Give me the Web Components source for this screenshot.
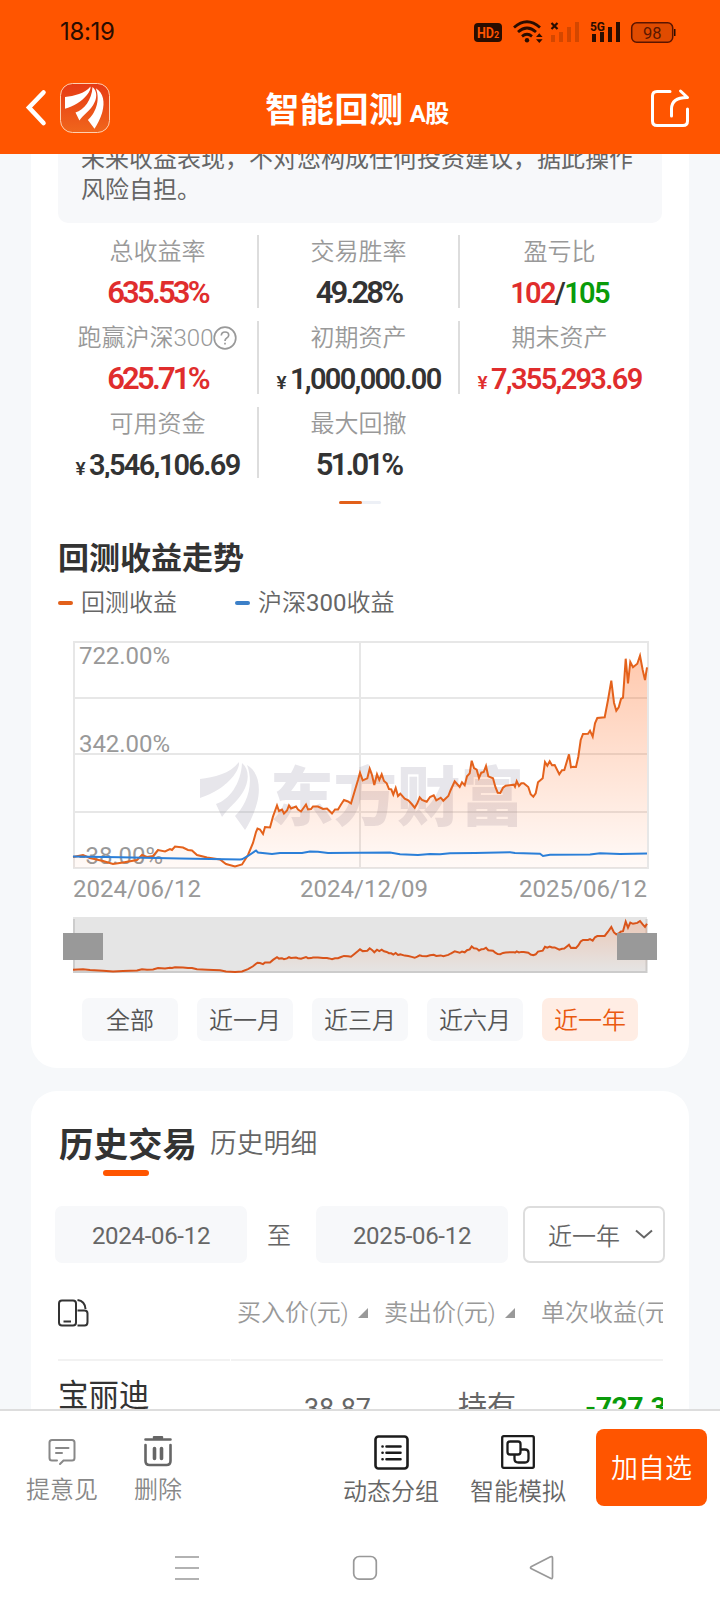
<!DOCTYPE html>
<html lang="zh-CN">
<head>
<meta charset="utf-8">
<title>智能回测</title>
<style>
body { margin: 0; width: 720px; height: 1612px; overflow: hidden; display: flex; flex-direction: column; background: #f6f8fa; color: #333; font: 24px/32px Roboto, "Noto Sans CJK SC", sans-serif; }
main { height: 1255px; overflow: hidden; padding: 0 31px; display: flex; flex-direction: column; gap: 23px; }
.profit { height: 914px; border-radius: 0 0 26px 26px; }
.history { height: 420px; border-radius: 26px 26px 0 0; }
.stats { display: grid; grid-template-columns: repeat(3, 201px); grid-auto-rows: 73px; row-gap: 13px; margin: 12px 0 0 27px; height: 243px; overflow: hidden; }
main, page-card, .stats { flex-shrink: 0; }
</style>
</head>
<body>
	<app-header><span>智能回测</span><small slot="sub">A股</small></app-header>
	<main>
		<page-card class="profit">
			<notice-box>未来收益表现，不对您构成任何投资建议，据此操作<br>风险自担。</notice-box>
			<div class="stats">
				<stat-cell kind="rate" tone="up" label="总收益率">635.53%</stat-cell>
				<stat-cell kind="rate" label="交易胜率">49.28%</stat-cell>
				<stat-cell kind="ratio" label="盈亏比" last><span style="color:#e02d2d">102</span>/<span style="color:#0a9b0a">105</span></stat-cell>
				<stat-cell kind="rate" tone="up" label="跑赢沪深300" help>625.71%</stat-cell>
				<stat-cell kind="money" label="初期资产">1,000,000.00</stat-cell>
				<stat-cell kind="money" tone="up" label="期末资产" last>7,355,293.69</stat-cell>
				<stat-cell kind="money" label="可用资金">3,546,106.69</stat-cell>
				<stat-cell kind="rate" label="最大回撤" last>51.01%</stat-cell>
			</div>
			<page-dots></page-dots>
			<chart-head><span>回测收益走势</span><span slot="a">回测收益</span><span slot="b">沪深<span style="font-weight:400">300</span>收益</span></chart-head>
			<trend-chart></trend-chart>
			<range-tabs items="全部,近一月,近三月,近六月,近一年" active="4"></range-tabs>
		</page-card>
		<page-card class="history">
			<history-tabs><span>历史交易</span><span slot="other">历史明细</span></history-tabs>
			<date-filter from="2024-06-12" to="2025-06-12">近一年</date-filter>
			<trade-table></trade-table>
		</page-card>
	</main>
	<tool-bar></tool-bar>
	<nav-bar></nav-bar>
<script>
const define = ( name, html, setup ) =>
{
	const template = document.createElement( 'template' );
	template.innerHTML = html;
	customElements.define( name, class extends HTMLElement
	{
		constructor()
		{
			super();
			this.attachShadow( { mode: 'open' } ).appendChild( template.content.cloneNode( true ) );
			if ( setup ) { setup( this, this.shadowRoot ); }
		}
	} );
};

// Three feathers of the brand mark, in a 60x68 box.
const FEATHERS = `
	<path d="M0 17C14 15 30 12 39 0C40 8 30 20 19 27C13 31 6 34 0 36Z"/>
	<path d="M42 1C50 8 49 20 43 30C37 40 29 45 22 55L16 42C29 38 41 22 42 1Z"/>
	<path d="M47 3C59 10 61 26 57 41C54 52 49 62 45 68L35 54C45 45 55 24 47 3Z"/>`;

define( 'app-header', `
<style>
:host { display: block; flex: none; height: 154px; background: #ff5500; color: #fff; }
.status { height: 64px; display: flex; align-items: center; padding: 0 44px 0 60px; box-sizing: border-box; color: #2a0d00; }
time { flex: 1; font: 24px/28px Inter, Roboto, sans-serif; letter-spacing: -.300px; }
.bar { display: grid; grid-template-columns: 120px 1fr 120px; align-items: center; height: 90px; }
.left { display: flex; gap: 13px; padding: 0 0 2px 25px; align-items: center; }
h1 { margin: 6px 0 0; font-size: 34px; line-height: 44px; font-weight: 700; display: flex; justify-content: center; align-items: baseline; gap: 6px; padding-right: 6px; letter-spacing: .600px; }
h1 ::slotted(small) { font-size: 24px; letter-spacing: -.5px; }
svg { display: block; }
.share { margin: -2px 0 0 50px; }
</style>
<div class="status">
	<time>18:19</time>
	<svg width="203" height="28" viewBox="473 18 203 28" fill="#2a0d00">
		<rect x="474" y="23" width="28" height="19" rx="4"/>
		<text x="477" y="38" font-family="Roboto" font-size="14.5" font-weight="700" fill="#ff5500" textLength="17" lengthAdjust="spacingAndGlyphs">HD</text>
		<text x="494" y="38" font-family="Roboto" font-size="9" font-weight="700" fill="#ff5500">2</text>
		<g fill="none" stroke="#2a0d00" stroke-width="2.8">
			<path d="M514 27.5Q527 16 540 27.5M518 32Q527 24 536 32M522 36.3Q527 32.3 532 36.3"/>
		</g>
		<circle cx="527" cy="40.3" r="2.2"/>
		<path d="M536 37l3.3-3.8 3.3 3.8zM536 39.2l3.3 3.8 3.3-3.8z"/>
		<path d="M551.5 23l6 6M557.500 23l-6 6" stroke="#2a0d00" stroke-width="2.2"/>
		<g opacity=".2"><path d="M551 35h4v7h-4zM559 32h4v10h-4zM567 27h4v15h-4zM575 22h4v20h-4z"/></g>
		<text x="590" y="31" font-family="Roboto" font-size="13" font-weight="700" textLength="15" lengthAdjust="spacingAndGlyphs">5G</text>
		<path d="M592 34h4v8h-4zM600 32h4v10h-4zM608 27h4v15h-4zM616 22h4v20h-4z"/>
		<rect x="631.7" y="22.700" width="41" height="19.500" rx="5" fill="#e04b00" stroke="#5a1500" stroke-width="1.500"/>
		<path d="M674 29h1.500v7h-1.500z"/>
		<text x="643" y="38.500" font-family="Roboto" font-size="16.500" fill="#5a1800">98</text>
	</svg>
</div>
<div class="bar">
	<div class="left">
		<svg width="22" height="38" viewBox="0 0 22 38"><path d="M18.500 3.500L4 18.500L18.500 34" fill="none" stroke="#fff" stroke-width="4.600" stroke-linecap="round"/></svg>
		<svg width="50" height="50" viewBox="0 0 50 50">
			<defs><linearGradient id="g" x2="0" y2="1"><stop stop-color="#e63a14"/><stop offset="1" stop-color="#f0661c"/></linearGradient></defs>
			<rect x=".5" y=".5" width="49" height="49" rx="12" fill="url(#g)" stroke="#ffd0b0"/>
			<g fill="#fff" transform="translate(5 3.500) scale(.655 .62)">${ FEATHERS }</g>
		</svg>
	</div>
	<h1><slot></slot><slot name="sub"></slot></h1>
	<svg class="share" width="40" height="40" viewBox="0 0 40 40" fill="none" stroke="#fff" stroke-width="3" stroke-linecap="round" stroke-linejoin="round">
		<path d="M20 3.500H7Q2.500 3.500 2.500 8V33Q2.500 37.500 7 37.500H33Q37.500 37.500 37.500 33V21M21.500 28V21Q21.500 9.500 37 9.500M30.500 3L37.500 9.500"/>
	</svg>
</div>` );

define( 'page-card', `
<style>:host { display: block; background: #fff; overflow: hidden; }</style>
<slot></slot>` );

define( 'notice-box', `
<style>
:host { display: flex; flex-direction: column; justify-content: flex-end; height: 69px; box-sizing: border-box; margin: 0 27px; padding: 0 0 17px 23px; background: #f7f8fa; border-radius: 0 0 10px 10px; color: #666; line-height: 31px; white-space: nowrap; overflow: hidden; }
</style>
<div><slot></slot></div>` );

define( 'stat-cell', `
<style>
:host { display: flex; flex-direction: column; align-items: center; box-sizing: border-box; width: 201px; border-right: 2px solid #ddd; white-space: nowrap; }
:host([last]) { border-color: transparent; }
:host([tone="up"]) .value { color: #e02d2d; }
.label { display: flex; align-items: center; height: 32px; padding-top: 1px; font-weight: 350; color: #999; }
.value { margin-top: 9px; height: 32px; line-height: 32px; font-weight: 600; font-size: 29px; color: #333; letter-spacing: -1.700px; }
:host([kind="rate"]) .value { font-size: 31px; letter-spacing: -2.800px; }
.yen { display: none; font-size: 19px; margin-right: 5px; }
:host([kind="money"]) .yen { display: inline; }
svg { display: none; }
:host([help]) svg { display: block; }
</style>
<div class="label"><span></span><svg width="24" height="24" viewBox="0 0 24 24" fill="none" stroke="#999" stroke-width="1.700"><circle cx="12" cy="12" r="10.800"/><path d="M8.300 9.500Q8.500 6 12 6Q15.700 6 15.700 9.200Q15.700 11 13.500 12.300Q12 13.200 12 15M12 16.800V18.500"/></svg></div>
<div class="value"><span class="yen">¥</span><slot></slot></div>`,
( host, root ) => { root.querySelector( '.label span' ).textContent = host.getAttribute( 'label' ); } );

define( 'page-dots', `
<style>
:host { display: flex; width: 42px; height: 3px; margin: 23px auto 0 308px; border-radius: 2px; background: #edf0f6; }
i { width: 23px; border-radius: 2px; background: #e2601a; }
</style>
<i></i>` );

define( 'chart-head', `
<style>
:host { display: block; margin-left: 27px; }
h2 { margin: 34px 0 0; font-size: 31px; line-height: 42px; font-weight: 700; }
.legend { display: flex; align-items: center; height: 32px; margin-top: 7px; color: #666; font-weight: 350; }
i { width: 15px; height: 4px; border-radius: 2px; background: #e2601a; margin-right: 8px; }
.b { background: #3c80c8; margin-left: 58px; margin-right: 8px; }
</style>
<h2><slot></slot></h2>
<div class="legend"><i></i><slot name="a"></slot><i class="b"></i><slot name="b"></slot></div>` );

const PROFIT = '73,857 83,855 90,858 103,861 113,864 123,862.5 137,860 142,855 147,857 153,856 158,850 165,851.5 170,849 172,850 175,846.5 183,847.5 188,850 192,850.5 197,855 207,857.5 220,859.5 226,864 235,866.5 242,864.5 248,855 253,843 256,832 257.5,828.5 260,829.5 263,834 265,827 270,827.5 273,816.5 277,805.5 279,811 282,809.5 284,813.5 287,810.5 289,805.5 291,808.5 296,806.5 298,809.5 301,811.5 306,804.5 308,809.5 311,809 313,806.5 318,806.5 323,809 327,808.5 329,810.5 332,813.5 335,809.5 338,809.5 341,804.5 344,800 348,801.5 351,803.5 355,790 358,780 360,772.7 362.7,780.3 367.3,778.3 369.7,768.7 372,775 374.3,785 377,774.3 379.3,780 381.7,774.3 384,781 386.7,783.3 389,789 391.3,789.3 393.3,794.7 395.7,788 398,796 400.3,793.7 404.7,798.7 408.3,800.3 411.7,804 414.7,807.7 417.3,803.3 419.7,797.3 422,800 426.7,801.7 430,797 433.7,795.3 436.3,800.3 440.7,797.7 443.3,800.7 448.3,796 450.7,790 454.7,781.3 459.7,787 462,782.3 464.7,785.3 467,776.3 469.7,773.3 471.7,760.7 474,768 476.7,769.7 479,778 481.3,772.7 483.7,772 486,766 488.3,776.3 493,778.3 495.3,786.7 497.7,792.7 500.3,793 503,787.7 505.7,785.7 514,784.7 515,786.7 516.7,781.3 519,786 521.3,783.3 523.7,783.3 528.3,787 530.7,794.3 533.3,796.7 535.7,793.3 538,782.3 542.7,778.3 545,762 547.3,765.7 549.7,761.3 552,765.3 554.7,765 559.3,774.3 562,770.3 564.3,770 569,754.3 571,767.3 573.3,766.7 576,767 578.3,756.7 580.7,740 583,734 588,733.7 590,730.7 592.7,736.7 595,723.3 597.3,718 604.7,717.3 608,700 611.3,680.7 614,702.7 616.3,710.7 618.7,707.3 621,699 623,697.7 625.7,658.7 628,683.3 630.3,662 633,667.3 637.3,663.7 640,655.7 642.7,670 645,680 647,667.3';
const INDEX = '73,856.5 120,857.3 180,858.5 240,859.5 242,859.3 248,856 256,850.5 258,852.5 272,854 280,853 302,853 310,851.5 318,851.7 328,853 390,852.4 400,854.3 418,855 430,854 440,854.3 450,853.3 475,853 510,852.3 515,853 540,853.8 543,856 550,854.8 590,854.5 600,853.3 620,854 647,853.5';
// The overview repeats the profit line, squeezed into the slider strip.
const OVERVIEW = PROFIT.split( ' ' ).map( ( p ) =>
{
	const [ x, y ] = p.split( ',' ).map( Number );
	return `${ x },${ ( 972 - ( 866.5 - y ) * 0.242 ).toFixed( 1 ) }`;
} ).join( ' ' );

define( 'trend-chart', `
<style>
:host { display: block; }
svg { display: block; }
text { font-family: Roboto, "Noto Sans CJK SC", sans-serif; font-size: 24px; fill: #999; }
.mark text { font-size: 64px; font-weight: 900; fill: #e7e6eb; }
</style>
<svg width="658" height="366" viewBox="31 619 658 366">
	<defs>
		<linearGradient id="area" gradientUnits="userSpaceOnUse" x1="0" y1="655" x2="0" y2="868"><stop stop-color="#ff5500" stop-opacity=".32"/><stop offset="1" stop-color="#ff5500" stop-opacity=".03"/></linearGradient>
		<linearGradient id="mini" gradientUnits="userSpaceOnUse" x1="0" y1="920" x2="0" y2="973"><stop stop-color="#ff5500" stop-opacity=".2"/><stop offset="1" stop-color="#ff5500" stop-opacity="0"/></linearGradient>
	</defs>
	<g class="mark">
		<g fill="#e7e6eb" transform="translate(200 762)">${ FEATHERS }</g>
		<text x="270" y="820" textLength="254" lengthAdjust="spacingAndGlyphs">东方财富</text>
	</g>
	<path d="M74 642H648V868H74ZM74 698H648M74 754H648M74 812H648M360 642V868" fill="none" stroke="#9a9a9a" stroke-opacity=".24" stroke-width="2"/>
	<text x="79" y="663.500" textLength="91">722.00%</text>
	<text x="79" y="752" textLength="91">342.00%</text>
	<text x="79" y="864" textLength="84">-38.00%</text>
	<polygon points="73,868 ${ PROFIT } 647,868" fill="url(#area)"/>
	<polyline points="${ PROFIT }" fill="none" stroke="#e4621c" stroke-width="2"/>
	<polyline points="${ INDEX }" fill="none" stroke="#2b7fd8" stroke-width="2"/>
	<text x="73" y="897" textLength="128">2024/06/12</text>
	<text x="300" y="897" textLength="128">2024/12/09</text>
	<text x="519" y="897" textLength="128">2025/06/12</text>
	<rect x="73" y="917" width="574" height="56" fill="#e5e5e5"/>
	<path d="M74 919V972H646.500V919" fill="none" stroke="#ccc" stroke-width="2"/>
	<polygon points="73,972 ${ OVERVIEW } 647,972" fill="url(#mini)"/>
	<polyline points="${ OVERVIEW }" fill="none" stroke="#d9541a" stroke-width="2"/>
	<path d="M63 933h40v27h-40zM617 933h40v27h-40z" fill="#999"/>
</svg>` );

define( 'range-tabs', `
<style>
:host { display: flex; gap: 19px; margin: 13px 0 0 51px; }
button { width: 96px; height: 43px; padding: 3px 0 0; border: 0; border-radius: 7px; background: #f7f8fa; color: #555; font: inherit; font-weight: 350; }
.on { background: #ffede4; color: #ea5a10; }
</style>`,
( host, root ) =>
{
	host.getAttribute( 'items' ).split( ',' ).forEach( ( item, i ) =>
	{
		const button = document.createElement( 'button' );
		button.textContent = item;
		button.className = i == host.getAttribute( 'active' ) ? 'on' : '';
		root.appendChild( button );
	} );
} );

define( 'history-tabs', `
<style>
:host { display: flex; gap: 12px; margin: 31px 0 0 27px; height: 55px; line-height: 46px; }
.on { width: 140px; font-size: 34.5px; font-weight: 700; display: flex; flex-direction: column; align-items: center; }
.on i { width: 46px; height: 6px; border-radius: 3px; background: #ff5500; margin: 2px 4px 0 0; }
.other { font-size: 26.800px; font-weight: 350; color: #666; margin-top: -1px; }
</style>
<div class="on"><slot></slot><i></i></div><div class="other"><slot name="other"></slot></div>` );

define( 'date-filter', `
<style>
:host { display: flex; align-items: center; margin: 29px 0 0 24px; height: 57px; color: #666; font-weight: 350; }
.date { box-sizing: border-box; width: 192px; height: 57px; padding-top: 2px; line-height: 57px; text-align: center; background: #f7f8fa; border-radius: 7px; font-weight: 400; letter-spacing: -.300px; }
.to { box-sizing: border-box; width: 69px; text-align: center; padding: 2px 5px 0 0; }
.select { box-sizing: border-box; width: 142px; height: 57px; margin-left: 15px; border: 2px solid #ddd; border-radius: 7px; display: flex; align-items: center; padding: 0 9px 0 23px; justify-content: space-between; }
.select span { padding-top: 4px; }
</style>
<div class="date from"></div><div class="to">至</div><div class="date until"></div>
<div class="select"><span><slot></slot></span><svg width="20" height="12" viewBox="0 0 20 12"><path d="M2 1.500L10 8.500L18 1.500" fill="none" stroke="#666" stroke-width="2"/></svg></div>`,
( host, root ) =>
{
	root.querySelector( '.from' ).textContent = host.getAttribute( 'from' );
	root.querySelector( '.until' ).textContent = host.getAttribute( 'to' );
} );

define( 'trade-table', `
<style>
:host { display: block; margin: 0 26px 0 27px; overflow: hidden; white-space: nowrap; }
.head, .row { display: grid; grid-template-columns: 179px 147px 157px 140px; }
.head { height: 96px; padding-top: 34px; box-sizing: border-box; color: #999; font-weight: 350; }
.head div { display: flex; align-items: center; height: 32px; }
.head .sort::after { content: ""; margin-left: 9px; border-left: 10px solid transparent; border-bottom: 10px solid #999; }
hr { margin: 0; border: 0; height: 2px; background: linear-gradient(90deg, #f2f2f2 172px, #fff 172px, #fff 173px, #f2f2f2 173px); }
.row { height: 60px; padding-top: 15px; color: #666; line-height: 40px; }
.name { font-size: 30.500px; color: #333; }
.num { font-size: 27px; padding: 13px 0 0 67px; letter-spacing: -.200px; }
.hold { font-size: 29px; padding: 11px 0 0 74px; }
.loss { font-size: 28.500px; font-weight: 700; color: #0a9b0a; padding: 12px 0 0 44px; letter-spacing: -.600px; }
</style>
<div class="head">
	<div><svg width="31" height="28" viewBox="0 0 31 28" fill="none" stroke="#333" stroke-width="2"><rect x="1" y="1.500" width="17" height="25" rx="3"/><path d="M5.500 22.500H13M19.500 1Q27 2 27.500 10M19.500 11.500H26.500Q29.500 11.500 29.500 14.500V23Q29.500 26.500 26.500 26.500H19.500"/></svg></div>
	<div class="sort">买入价(元)</div><div class="sort">卖出价(元)</div><div>单次收益(元)</div>
</div>
<hr>
<div class="row"><div class="name">宝丽迪</div><div class="num">38.87</div><div class="hold">持有</div><div class="loss">-727.3</div></div>` );

define( 'tool-item', `
<style>
:host { display: flex; flex-direction: column; align-items: center; color: #666; font-weight: 350; white-space: nowrap; }
::slotted(svg) { display: block; flex: none; }
</style>
<slot name="icon"></slot><div><slot></slot></div>` );

define( 'tool-bar', `
<style>
:host { display: flex; flex: none; box-sizing: border-box; height: 122px; border-top: 2px solid #ddd; background: #fff; padding: 18px 13px 0 26px; align-items: flex-start; }
.grey { color: #888; }
.cta { width: 111px; height: 77px; margin-left: auto; padding: 3px 0 0; border: 0; border-radius: 8px; background: #ff5500; color: #fff; font: inherit; font-size: 27px; font-weight: 350; }
</style>
<tool-item class="grey" style="width:72px;padding-top:9px"><svg slot="icon" width="28" height="36" viewBox="0 0 28 36" fill="none" stroke="#888" stroke-width="2" stroke-linecap="round"><path d="M9 22.500H4Q1.500 22.500 1.500 20V4.500Q1.500 2 4 2H24Q26.500 2 26.500 4.500V20Q26.500 22.500 24 22.500H15.500L12 26M8 10H20.500M8 15H14"/></svg>提意见</tool-item>
<tool-item class="grey" style="width:48px;padding-top:7px;margin-left:36px"><svg slot="icon" width="28" height="38" viewBox="0 0 28 38" fill="none" stroke="#666" stroke-width="2.600" stroke-linecap="round"><path d="M10 1.300H18M1.500 3.500H26.500M1.500 9V25Q1.500 29 5.500 29H22.500Q26.500 29 26.500 25V9"/><path d="M10.500 12.500V22.500M17.500 12.500V22.500" stroke-width="3.600"/></svg>删除</tool-item>
<tool-item style="width:96px;padding-top:6px;margin-left:161px"><svg slot="icon" width="35" height="41" viewBox="0 0 35 41" fill="none" stroke="#1c1c1c" stroke-width="2.600" stroke-linecap="round"><rect x="1.500" y="1.500" width="32" height="32" rx="3"/><path d="M12.500 11.500H26.500M12.500 17.800H26.500M12.500 24.200H26.500M8.500 11.500h.1M8.500 17.800h.1M8.500 24.200h.1"/></svg>动态分组</tool-item>
<tool-item style="width:96px;padding-top:6px;margin-left:31px"><svg slot="icon" width="34" height="41" viewBox="0 0 34 41" fill="none" stroke="#1c1c1c" stroke-width="2.300"><rect x="1.200" y="1.200" width="31.600" height="31.600" rx="1.500"/><path d="M19.500 14.500H24Q27.500 14.500 27.500 18V23.500Q27.500 27.500 24 27.500H17.500Q13.500 27.500 13.500 24V19.500"/><rect x="6.500" y="6.500" width="13" height="13" rx="2.500"/></svg>智能模拟</tool-item>
<button class="cta">加自选</button>` );

define( 'nav-bar', `
<style>
:host { display: flex; flex: none; height: 81px; background: #fff; padding: 24px 165px 0 174px; box-sizing: border-box; justify-content: space-between; }
svg { fill: none; stroke: #999; stroke-width: 1.700; stroke-linejoin: round; }
</style>
<svg width="26" height="26"><path d="M1 2H25M1 13H25M1 24H25"/></svg>
<svg width="26" height="26"><rect x="1.700" y="1.500" width="22.600" height="22.600" rx="5.500"/></svg>
<svg width="26" height="26"><path d="M2 11.800L21.500 1.800Q23.500 1 23.500 3V22Q23.500 24.300 21.500 23.300L2 13.600Q1 12.700 2 11.800Z"/></svg>` );
</script>
</body>
</html>
